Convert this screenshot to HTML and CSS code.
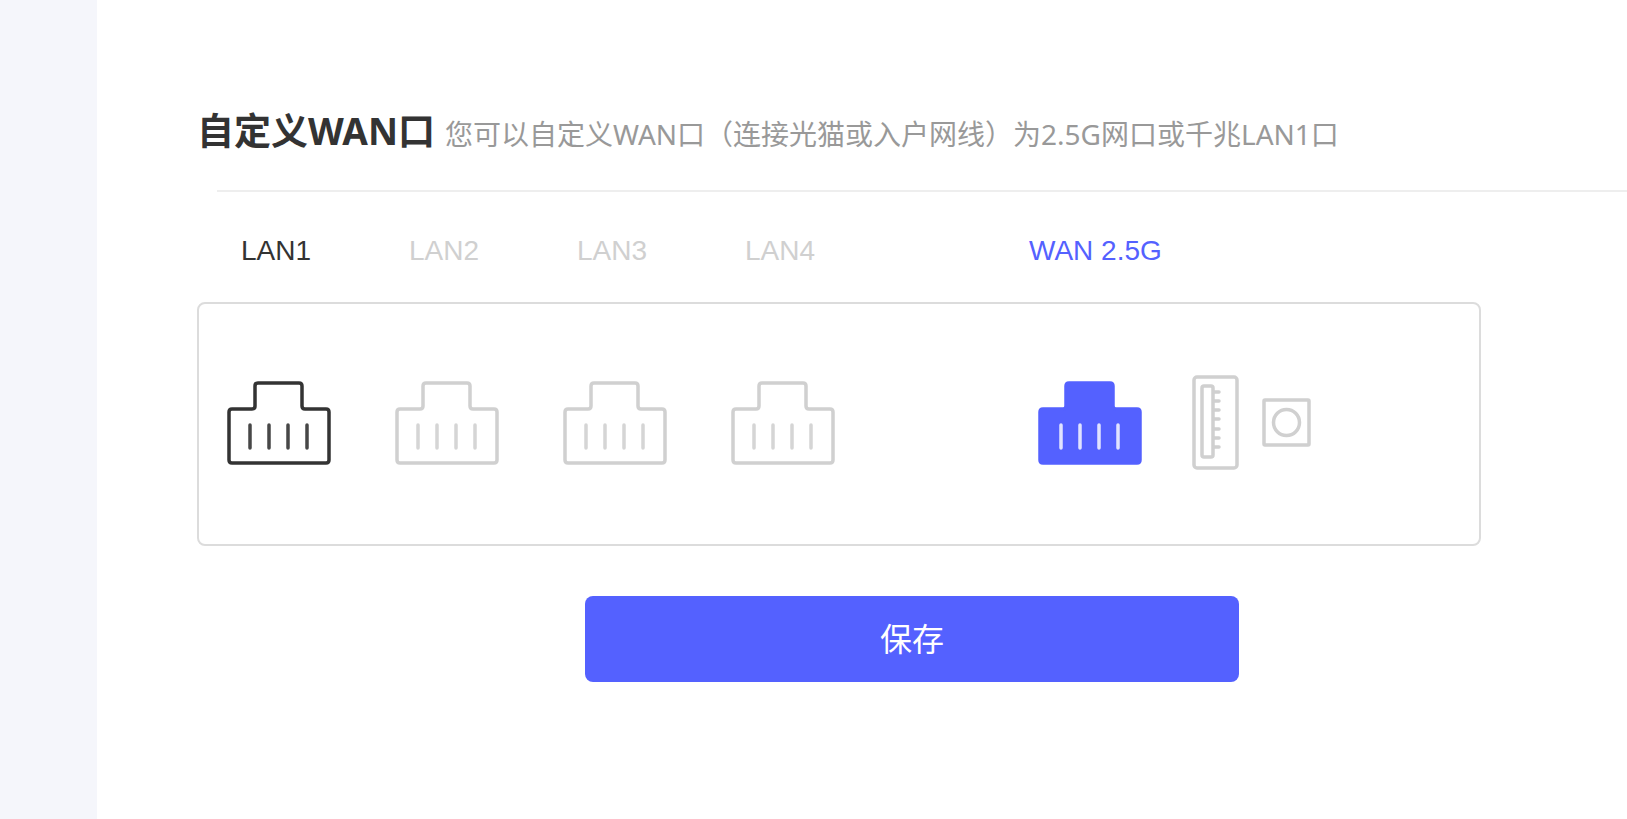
FILE: index.html
```
<!DOCTYPE html>
<html lang="zh-CN">
<head>
<meta charset="UTF-8">
<meta name="viewport" content="width=device-width, initial-scale=1.0">
<title>自定义WAN口</title>
<link rel="stylesheet" href="styles.css">
</head>
<body>
    <!-- 图标定义 -->
    <svg class="defs" aria-hidden="true">
        <symbol id="port" viewBox="0 0 104 84">
            <path d="M5 28H25Q28 28 28 25V5Q28 2 31 2H72Q75 2 75 5V25Q75 28 78 28H99Q102 28 102 31V79Q102 82 99 82H5Q2 82 2 79V31Q2 28 5 28Z"/>
            <path class="pin" d="M23 44V67M42 44V67M61 44V67M80 44V67"/>
        </symbol>
    </svg>

    <aside class="sidebar"></aside>
    <main class="content">
        <header class="head">
            <h1>自定义WAN口</h1>
            <p>您可以自定义WAN口（连接光猫或入户网线）为2.5G网口或千兆LAN1口</p>
        </header>
        <hr class="line">

        <form>
            <div class="labels">
                <label class="active" for="lan1">LAN1</label>
                <label for="lan2">LAN2</label>
                <label for="lan3">LAN3</label>
                <label for="lan4">LAN4</label>
                <label class="wan" for="wan">WAN 2.5G</label>
            </div>
            <div class="panel">
                <button type="button" class="port active" id="lan1"><svg><use href="#port"/></svg></button>
                <button type="button" class="port" id="lan2" disabled><svg><use href="#port"/></svg></button>
                <button type="button" class="port" id="lan3" disabled><svg><use href="#port"/></svg></button>
                <button type="button" class="port" id="lan4" disabled><svg><use href="#port"/></svg></button>
                <button type="button" class="port wan" id="wan"><svg><use href="#port"/></svg></button>
                <!-- USB -->
                <svg class="usb" viewBox="0 0 48 96">
                    <rect x="2" y="2" width="43" height="91" rx="3"/>
                    <rect x="10" y="11" width="11" height="71" rx="2"/>
                    <path d="M22 17H27M22 26H27M22 35H27M22 44H27M22 54H27M22 63H27M22 72H27"/>
                </svg>
                <!-- 电源 -->
                <svg class="power" viewBox="0 0 50 50">
                    <rect x="2" y="2" width="45" height="45" rx="1"/>
                    <circle cx="24.5" cy="24.5" r="13"/>
                </svg>
            </div>
            <button type="submit" class="save">保存</button>
        </form>
    </main>
</body>
</html>
```
FILE: styles.css
```
* {
    box-sizing: border-box;
}
body {
    margin: 0;
    min-height: 100vh;
    display: flex;
    background: #fff;
    font-family: "Noto Sans", "Noto Sans CJK SC", sans-serif;
}
.defs {
    position: absolute;
    width: 0;
    height: 0;
}
.sidebar {
    width: 97px;
    flex-shrink: 0;
    background: #f5f6fb;
}
.content {
    flex: 1;
    min-width: 0;
    padding: 103px 0 40px 100px;
}
.head {
    display: flex;
    align-items: baseline;
    gap: 10px;
    line-height: 56px;
}
h1 {
    margin: 0;
    font-size: 37px;
    color: #333;
    white-space: nowrap;
}
.head p {
    margin: 0;
    font-size: 28px;
    color: #999;
}
.line {
    margin: 28px 0 0 20px;
    border: 0;
    border-top: 2px solid #eee;
}
.labels {
    display: flex;
    padding: 38px 0 30px 44px;
    font-family: "Liberation Sans", Arial, sans-serif;
    font-size: 28px;
    line-height: 42px;
    color: #d0d0d0;
}
.labels label {
    width: 168px;
}
.labels .active {
    color: #333;
}
.labels .wan {
    margin-left: 116px;
    color: #5461ff;
}
.panel {
    display: flex;
    align-items: center;
    width: 90%;
    max-width: 1284px;
    height: 244px;
    padding: 0 0 2px 28px;
    border: 2px solid #dcdcdc;
    border-radius: 8px;
}
.panel svg {
    display: block;
    flex-shrink: 0;
    fill: none;
    stroke: #d0d0d0;
    stroke-width: 3.5;
    stroke-linecap: round;
}
.port {
    margin: 0 64px 0 0;
    padding: 0;
    border: 0;
    background: none;
    cursor: pointer;
}
.port:disabled {
    cursor: default;
}
.port svg {
    width: 104px;
    height: 84px;
}
.port.active svg {
    stroke: #333;
}
.port.wan {
    margin: 0 50px 0 139px;
    --pin: #f1f2ff;
}
.port.wan svg {
    fill: #5461ff;
    stroke: #5461ff;
}
.pin {
    stroke: var(--pin);
    opacity: 0.9;
}
.panel .usb {
    width: 48px;
    height: 96px;
    margin-right: 22px;
}
.panel .power {
    width: 50px;
    height: 50px;
}
.save {
    display: block;
    width: 46%;
    max-width: 654px;
    height: 86px;
    margin: 50px auto 0;
    padding: 0 0 4px;
    border: 0;
    border-radius: 8px;
    background: #5461ff;
    color: #fff;
    font-family: inherit;
    font-size: 32px;
    cursor: pointer;
}
```
